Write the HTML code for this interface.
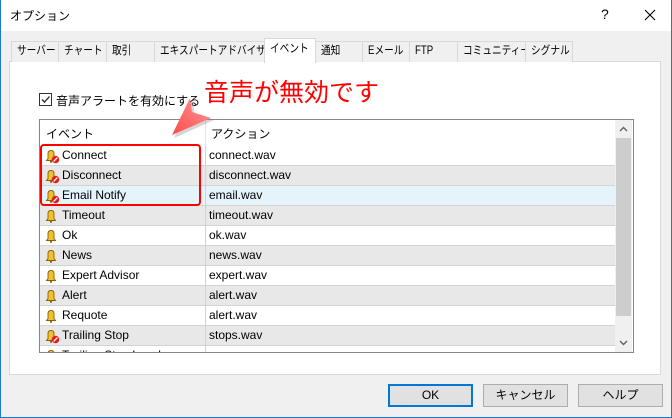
<!DOCTYPE html>
<html><head><meta charset="utf-8"><style>
*{margin:0;padding:0;box-sizing:border-box}
body{width:672px;height:418px;overflow:hidden;background:#f0f0f0;font-family:"Liberation Sans","Noto Sans CJK JP",sans-serif;font-size:12px;color:#000;position:relative}
.win{position:absolute;left:0;top:0;width:672px;height:418px;border:1px solid #1c7ad0;border-top:none;background:#f0f0f0}
.title{position:absolute;left:0;top:0;width:670px;height:31px;background:#fff}
.abs{position:absolute;white-space:nowrap}
.tab{position:absolute;top:41px;height:21px;border:1px solid #d9d9d9;border-bottom:none;background:#f0f0f0;font-size:11.5px;padding-left:5px;line-height:19px;white-space:nowrap;overflow:hidden}
.tab span{display:inline-block;transform:scaleX(0.84);transform-origin:left center}
.panel{position:absolute;left:8px;top:61px;width:652px;height:314px;background:#fff;border:1px solid #d9d9d9}
.list{position:absolute;left:38px;top:119px;width:595px;height:234px;border:1px solid #828790;background:#fff;overflow:hidden}
.row{position:absolute;left:0;width:576px;height:20px;border-bottom:1px solid #d4d4d4;font-size:12px;line-height:19px}
.row .a{position:absolute;left:22px}
.row .b{position:absolute;left:169px}
.row .d{position:absolute;left:165px;top:0;height:20px;border-left:1px solid #d4d4d4}
.g{background:#e8e8e8}.s{background:#e5f3fb}
.ic{position:absolute;left:4px;top:2px}
.btn{position:absolute;top:384px;height:23px;width:85px;background:#e1e1e1;border:1px solid #adadad;text-align:center;line-height:21px;font-size:12px}
</style></head><body>
<div class="win">
<div class="title"></div>
<div class="abs" style="left:9px;top:7px;font-size:12px">オプション</div>
<div class="abs" style="left:600px;top:6px;font-size:14px">?</div>
<svg class="abs" style="left:643px;top:9px" width="12" height="12"><path d="M1 1 L11 11 M11 1 L1 11" stroke="#000" stroke-width="1.1"/></svg>

<div class="panel"></div>
<div class="tab" style="left:10px;width:48px"><span>サーバー</span></div>
<div class="tab" style="left:57px;width:49px"><span>チャート</span></div>
<div class="tab" style="left:105px;width:49px"><span>取引</span></div>
<div class="tab" style="left:153px;width:111px"><span>エキスパートアドバイザ</span></div>
<div class="tab" style="left:314px;width:48px"><span>通知</span></div>
<div class="tab" style="left:361px;width:48px"><span>Eメール</span></div>
<div class="tab" style="left:408px;width:49px"><span>FTP</span></div>
<div class="tab" style="left:456px;width:69px"><span>コミュニティー</span></div>
<div class="tab" style="left:524px;width:48px"><span>シグナル</span></div>
<div class="tab" style="left:263px;top:38px;width:52px;height:25px;background:#fff;line-height:21px;z-index:2"><span>イベント</span></div>

<div class="abs" style="left:38px;top:93px;width:13px;height:13px;border:1px solid #333;background:#fff"><svg width="11" height="11" style="position:absolute;left:0;top:0"><path d="M2 5.5 L4.5 8 L9.5 2.5" stroke="#222" stroke-width="1.3" fill="none"/></svg></div>
<div class="abs" style="left:55px;top:92px;font-size:12px">音声アラートを有効にする</div>
<div class="abs" style="left:203px;top:78px;font-size:25px;color:#f00;line-height:30px">音声が無効です</div>

<div class="list">
<div class="abs" style="left:0;top:0;width:576px;height:26px;background:#fff"></div>
<div class="abs" style="left:6px;top:5px;font-size:12px">イベント</div>
<div class="abs" style="left:165px;top:0;height:26px;border-left:1px solid #e5e5e5"></div>
<div class="abs" style="left:171px;top:5px;font-size:12px">アクション</div>
<div class="row" style="top:26px"><span class="a">Connect</span></div>
</div>
</div>
<script>
var rows=[["Connect","connect.wav",1],["Disconnect","disconnect.wav",1],["Email Notify","email.wav",1],["Timeout","timeout.wav",0],["Ok","ok.wav",0],["News","news.wav",0],["Expert Advisor","expert.wav",0],["Alert","alert.wav",0],["Requote","alert.wav",0],["Trailing Stop","stops.wav",1],["Trailing Stop Level","",0]];
var L=document.querySelector('.list');L.removeChild(L.lastElementChild);
rows.forEach(function(r,i){var d=document.createElement('div');d.className='row'+(i==2?' s':(i%2?' g':''));d.style.top=(26+i*20)+'px';
var bell='<svg class="ic" width="16" height="16" viewBox="0 0 16 16"><path d="M2.5 12.5 L11.5 12.5 L10 10.5 L10 5.5 Q10 2.5 7 2.5 Q4 2.5 4 5.5 L4 10.5 Z" fill="#f0c030" stroke="#8a6000" stroke-width="0.9"/><circle cx="7" cy="13.8" r="1.1" fill="#8a6000"/>'+(r[2]?'<circle cx="11.5" cy="11.5" r="3.8" fill="#e02020"/><path d="M9.6 13.4 L13.4 9.6" stroke="#fff" stroke-width="1.3"/>':'')+'</svg>';
d.innerHTML=bell+'<span class="a">'+r[0]+'</span><span class="d"></span><span class="b">'+r[1]+'</span>';L.appendChild(d);});
</script>
<div class="abs" style="left:615px;top:120px;width:17px;height:232px;background:#f0f0f0"></div>
<div class="abs" style="left:616px;top:138px;width:15px;height:178px;background:#cdcdcd"></div>
<svg class="abs" style="left:619px;top:126px" width="9" height="6"><path d="M1 5 L4.5 1.5 L8 5" stroke="#606060" stroke-width="1.4" fill="none"/></svg>
<svg class="abs" style="left:619px;top:340px" width="9" height="6"><path d="M1 1 L4.5 4.5 L8 1" stroke="#606060" stroke-width="1.4" fill="none"/></svg>
<div class="abs" style="left:40px;top:144px;width:161px;height:62px;border:2px solid #f00;border-radius:4px"></div>
<svg class="abs" style="left:160px;top:90px" width="60" height="55"><defs><linearGradient id="gr" x1="0" y1="1" x2="1" y2="0"><stop offset="0" stop-color="#ff4a4a"/><stop offset="1" stop-color="#ff9a9a"/></linearGradient></defs><path d="M12 46 L30 8 L33 22 L52 28 Z" fill="#888" opacity="0.35" transform="translate(2,2)"/><path d="M12 45 L30 8 L32 22 L51 28 Z" fill="url(#gr)"/></svg>
<div class="btn" style="left:388px;border:2px solid #0078d7;line-height:19px">OK</div>
<div class="btn" style="left:483px">キャンセル</div>
<div class="btn" style="left:578px">ヘルプ</div>
</body></html>
